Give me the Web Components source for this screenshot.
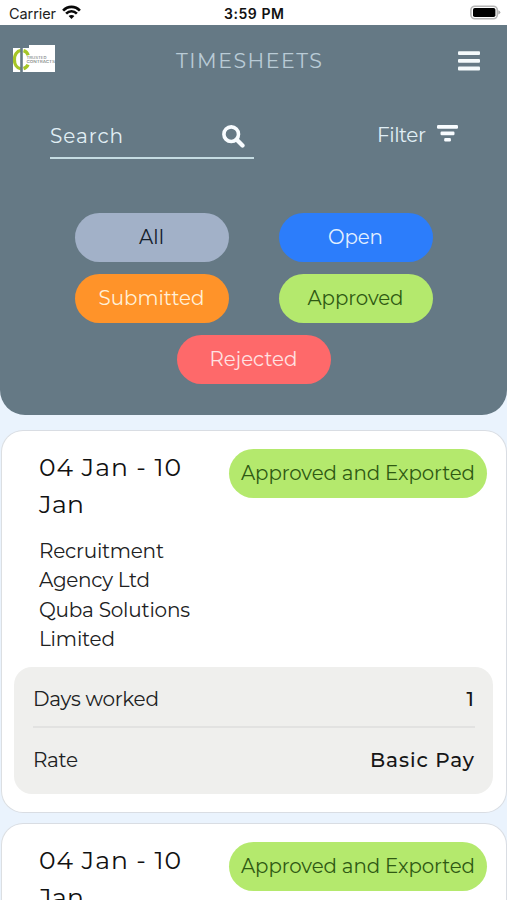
<!DOCTYPE html>
<html lang="en">
<head>
<meta charset="utf-8">
<title>Timesheets</title>
<style>
html,body{margin:0;height:900px;overflow:hidden;background:#eaf3fd;font-family:Montserrat,Inter,"Liberation Sans",sans-serif;color:#202122}
</style>
</head>
<body>
<timesheet-app></timesheet-app>
<script>
const define = (name, html, ready) => {
  const tpl = document.createElement('template');
  tpl.innerHTML = html;
  customElements.define(name, class extends HTMLElement {
    constructor() {
      super();
      this.attachShadow({mode: 'open'}).append(tpl.content.cloneNode(true));
    }
    connectedCallback() { if (ready) ready(this, this.shadowRoot); }
  });
};

/* One line of text, tracked so that its glyphs span the width in "w". */
define('tracked-text', `
<style>:host{display:inline-block;white-space:nowrap}span{display:inline-block}</style>
<span><slot></slot></span>`, (el, root) => {
  const span = root.querySelector('span');
  const n = el.textContent.length;
  const extra = (+el.getAttribute('w') - span.getBoundingClientRect().width) / (n - 1);
  span.style.letterSpacing = extra + 'px';
  span.style.marginRight = -extra + 'px';
});

define('status-bar', `
<style>
:host{display:grid;grid-template-columns:1fr auto 1fr;align-items:center;height:25px;padding:2px 5px 0 9px;background:#fff;box-sizing:border-box;font:14.5px/23px Inter,sans-serif;color:#222}
.l{display:flex;align-items:center;gap:6px}
.t{font-weight:600;font-size:14px;color:#111;margin-right:3px}
.r{display:flex;justify-content:flex-end;margin-top:-2px}
svg{display:block}
.l svg{margin-top:-2px}
</style>
<div class="l"><tracked-text w="47">Carrier</tracked-text>
<svg width="19" height="15" viewBox="0 0 19 15" fill="none" stroke="#080808" stroke-width="2.6"><path d="M1.1 5.6C5.8.6 13.2.6 17.9 5.6M4.1 8.7c3.2-3.3 7.6-3.3 10.8 0"/><path d="M9.5 14 6.6 11.1c1.7-1.6 4.1-1.6 5.8 0z" fill="#080808" stroke="none"/></svg></div>
<tracked-text class="t" w="60">3:59 PM</tracked-text>
<div class="r"><svg width="32" height="16" viewBox="0 0 32 16"><rect x=".9" y="1.2" width="26.4" height="12.6" rx="4" fill="#fff" stroke="#b5b5b5" stroke-width="1.6"/><rect x="3" y="3" width="22.4" height="9" rx="1.8" fill="#000"/><path d="M28.3 5.3q4.2 2.1 0 4.3z" fill="#aaa"/></svg></div>`);

define('brand-logo', `
<style>:host{display:block;width:43px;height:28px}svg{display:block}text{font:500 3.7px Inter,sans-serif;fill:#7d8482}</style>
<svg width="43" height="28" viewBox="0 0 43 28"><path d="M0 3h16V0h26v27H0z" fill="#fff"/><path d="M8 5.4C-.8 7-.8 22.4 8 23.8M10.5 5.6c2.4.7 3.9 2.200 4.700 4.600M10.500 23.600c2.200-.7 3.700-2 4.500-4" fill="none" stroke="#a6c626" stroke-width="3.300"/><path d="M7.200 2.500h2.600V27H7.200z" fill="#657985"/><text x="13.500" y="13.500" textLength="20" lengthAdjust="spacingAndGlyphs">TRUSTED</text><text x="13.500" y="18" textLength="28.500" lengthAdjust="spacingAndGlyphs">CONTRACTS</text></svg>`);

define('app-bar', `
<style>
:host{display:grid;grid-template-columns:1fr auto 1fr;align-items:center;height:71px;padding:0 27px 0 13px}
brand-logo{margin-top:-4px}
tracked-text{color:#b9cbd6;font-size:20.500px;font-weight:400;line-height:30px;margin-left:5px}
svg{justify-self:end;display:block}
</style>
<brand-logo></brand-logo><tracked-text w="146">TIMESHEETS</tracked-text>
<svg width="22" height="20" viewBox="0 0 22 20" fill="#f4fafc"><rect y=".2" width="22" height="3.800" rx="1"/><rect y="8" width="22" height="3.800" rx="1"/><rect y="15.600" width="22" height="3.800" rx="1"/></svg>`);

define('search-row', `
<style>
:host{display:flex;justify-content:space-between;align-items:flex-start;margin:19px 49px 0 50px;color:#e1eff5;font-size:20px}
.s{display:flex;justify-content:space-between;align-items:center;box-sizing:border-box;width:204px;height:44px;padding-right:9px;border-bottom:2px solid #c5dce2}
.f{display:flex;align-items:center;gap:11px;height:39px}
.f svg{margin-top:-2px}
svg{display:block}
</style>
<div class="s"><tracked-text w="73">Search</tracked-text>
<svg width="23" height="23" viewBox="0 0 23 23" fill="none" stroke="#f8fcff"><circle cx="9.200" cy="9.200" r="7.300" stroke-width="3.600"/><path d="m14.800 14.800 5.700 5.700" stroke-width="4.300" stroke-linecap="round"/></svg></div>
<div class="f"><tracked-text w="49">Filter</tracked-text>
<svg width="21" height="17" viewBox="0 0 21 17" fill="#f8fcff"><rect width="21" height="3.800" rx="1.200"/><rect x="3.500" y="6.500" width="14" height="3.700" rx="1.200"/><rect x="7.200" y="12.900" width="6.700" height="3.500" rx="1.200"/></svg></div>`);

define('status-pill', `
<style>
:host{display:flex;align-items:center;justify-content:center;box-sizing:border-box;height:49px;width:154px;padding-bottom:1px;border-radius:25px;font-size:19.800px;background:#b4e96d;color:#2f5913;flex:none}
:host([kind=all]){background:#a2b1c8;color:#14202b}
:host([kind=open]){background:#2c7dfb;color:#e3f0ff}
:host([kind=submitted]){background:#ff9329;color:#fff0d8}
:host([kind=rejected]){background:#fe696a;color:#ffe2e2}
:host([wide]){width:258px}
</style><slot></slot>`);

define('filter-pills', `
<style>:host{display:flex;flex-wrap:wrap;justify-content:center;gap:12px 50px;margin:54.400px 50px 0}</style>
<status-pill kind="all"><tracked-text w="25">All</tracked-text></status-pill>
<status-pill kind="open"><tracked-text w="55">Open</tracked-text></status-pill>
<status-pill kind="submitted"><tracked-text w="106">Submitted</tracked-text></status-pill>
<status-pill><tracked-text w="96">Approved</tracked-text></status-pill>
<status-pill kind="rejected"><tracked-text w="88">Rejected</tracked-text></status-pill>`);

define('page-header', `
<style>:host{display:block;height:390px;box-sizing:border-box;background:#657985;border-radius:0 0 25px 25px}</style>
<app-bar></app-bar><search-row></search-row><filter-pills></filter-pills>`);

define('detail-row', `
<style>
:host{display:flex;justify-content:space-between;align-items:center;box-sizing:border-box;height:59px;padding:4px 1px 0 0;font-size:20px}
:host([last]){padding-top:0;border-top:2px solid #e2e2e1;height:65px}
::slotted([slot=value]){color:#161616;font-weight:500}
</style><slot></slot><slot name="value"></slot>`);

define('timesheet-card', `
<style>
:host{display:block;box-sizing:border-box;height:383px;margin:0 0 10px 1px;width:506px;padding:18px 12px;border:1px solid #d9dde3;border-left-color:#dcdfe2;border-radius:22px;background:#fff}
.top{display:flex;justify-content:space-between;padding:0 7px 0 25px}
.date{display:flex;flex-direction:column;align-items:flex-start;font-size:25px;line-height:37px;color:#111}
.co{display:flex;flex-direction:column;align-items:flex-start;padding:14px 25px 0;font-size:20px;line-height:29.300px}
.box{box-sizing:border-box;width:479px;height:127px;margin-top:13px;padding:0 18px 0 19px;border-radius:18px;background:#efefed}
</style>
<div class="top"><div class="date"><tracked-text w="142">04 Jan - 10</tracked-text><tracked-text w="45">Jan</tracked-text></div>
<status-pill wide><tracked-text w="234">Approved and Exported</tracked-text></status-pill></div>
<div class="co"><tracked-text w="125">Recruitment</tracked-text><tracked-text w="111">Agency Ltd</tracked-text><tracked-text w="151">Quba Solutions</tracked-text><tracked-text w="76">Limited</tracked-text></div>
<div class="box">
<detail-row><tracked-text w="126">Days worked</tracked-text><span slot="value">1</span></detail-row>
<detail-row last><tracked-text w="45">Rate</tracked-text><tracked-text slot="value" w="104">Basic Pay</tracked-text></detail-row>
</div>`);

define('timesheet-app', `
<style>:host{display:block;height:900px;overflow:hidden}.list{padding-top:15px}</style>
<status-bar></status-bar><page-header></page-header>
<div class="list"><timesheet-card></timesheet-card><timesheet-card></timesheet-card></div>`);
</script>
</body>
</html>
